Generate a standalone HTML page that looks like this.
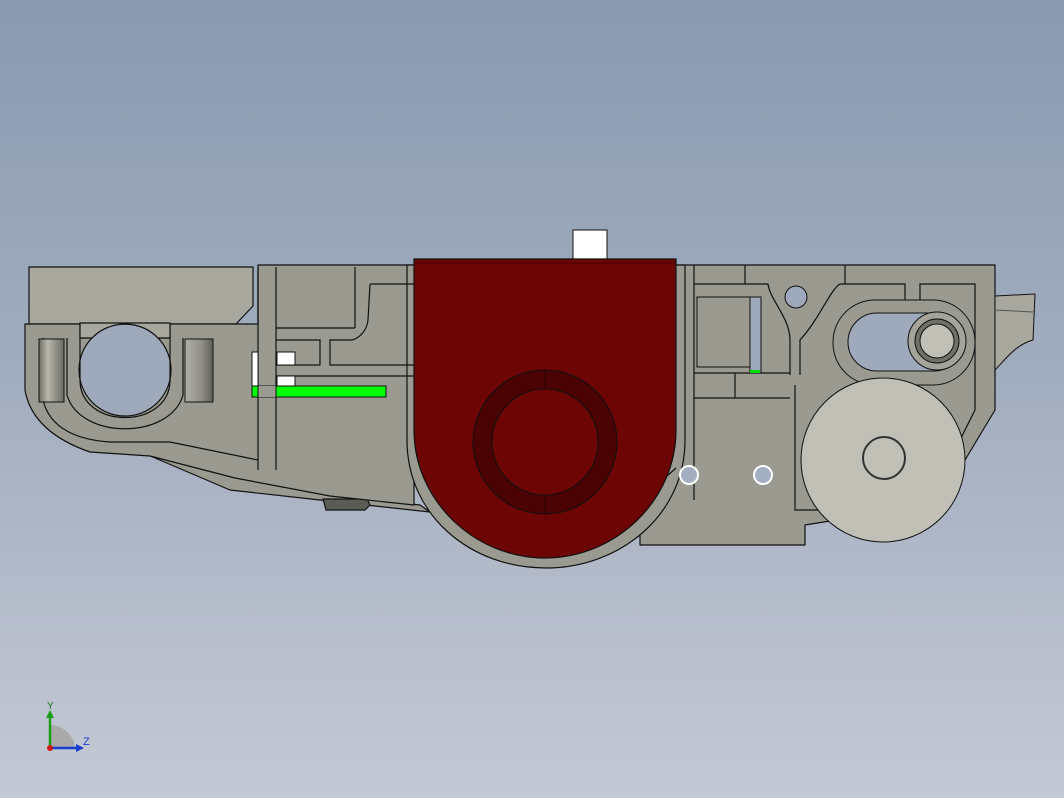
<!DOCTYPE html>
<html><head><meta charset="utf-8"><style>
html,body{margin:0;padding:0;width:1064px;height:798px;overflow:hidden}
body{background:linear-gradient(#8a9ab0 0%,#a3aec0 50%,#c5c9d5 100%)}
svg{position:absolute;left:0;top:0}
</style></head><body>
<svg width="1064" height="798" viewBox="0 0 1064 798">
<defs>
<linearGradient id="cyl" x1="0" x2="1"><stop offset="0" stop-color="#6e6e66"/><stop offset=".35" stop-color="#b8b8ac"/><stop offset="1" stop-color="#6a6a62"/></linearGradient>
<linearGradient id="cyl2" x1="0" x2="1"><stop offset="0" stop-color="#b0b0a6"/><stop offset=".6" stop-color="#8e8e86"/><stop offset="1" stop-color="#5e5e58"/></linearGradient>
</defs>
<g stroke="#111" stroke-width="1.2" stroke-linejoin="round">
<polygon points="29,267 253,267 253,306 236,324 29,324" fill="#a8a89e"/>
<polygon points="148,455 230,470 330,495 420,505 430,512 320,500 230,490" fill="#9a9a90"/>
<polygon points="323,499 367,499 370,505 365,510 326,510" fill="#5c5c56"/>
<path d="M25,324 L80,324 L80,338 L91,338 C105,325 145,325 159,338 L170,338 L170,324 L258,324 L258,265 L414,265 L414,505 L330,496 L235,478 L150,456 L90,452 C55,440 30,420 25,390 Z" fill="#9a9a90"/>
<path d="M676,265 L995,265 L995,410 L965,460 L930,505 L805,525 L805,545 L640,545 L640,500 L676,470 Z" fill="#9a9a90"/>
<path d="M407,265 L685,265 L685,440 C685,515 620,568 546,568 C470,568 407,515 407,440 Z" fill="#9a9a90"/>
</g>
<circle cx="125" cy="370" r="46" fill="#9eaabb" stroke="#111" stroke-width="1.2"/>
<path d="M80,323 L170,323 L170,338 L158,338 A46,46 0 0 0 92,338 L80,338 Z" fill="#a8a89e" stroke="#111" stroke-width="1.2"/>
<g fill="none" stroke="#111" stroke-width="1.2">
<path d="M80,338 L80,380 C80,430 170,430 170,380 L170,338"/>
<path d="M67,338 L67,395 C80,440 170,440 183,395 L183,338"/>
<path d="M43,338 L43,400 C50,430 80,440 110,442 L170,442 L258,460"/>
<path d="M258,267 L258,470 M276,267 L276,470 M276,328 L355,328 M355,267 L355,328 M370,284 L414,284 M370,284 L368,320 C367,330 360,338 352,340 L330,340 L330,365 L414,365 M276,340 L320,340 L320,365 L276,365 M276,376 L414,376"/>
<path d="M694,265 L694,500 M745,265 L745,284 M845,265 L845,284 M694,284 L768,284 C770,300 790,318 790,340 L790,375 M800,375 L800,340 C820,318 830,290 840,284 L905,284 L905,300 M920,300 L920,284 L975,284 L975,410 L950,460"/>
<path d="M694,373 L790,373 M694,398 L790,398 M735,373 L735,398 M795,385 L795,510 L830,510 M640,500 L676,468"/>
</g>
<rect x="39" y="339" width="25" height="63" fill="url(#cyl)" stroke="#111"/>
<rect x="185" y="339" width="28" height="63" fill="url(#cyl2)" stroke="#111"/>
<rect x="252" y="352" width="6" height="35" fill="#fff" stroke="#111"/>
<rect x="277" y="352" width="18" height="13" fill="#fff" stroke="#111"/>
<rect x="277" y="376" width="18" height="11" fill="#fff" stroke="#111"/>
<rect x="252" y="386" width="134" height="11" fill="#00ff00" stroke="#111"/>
<rect x="258" y="386" width="18" height="11" fill="#9a9a90"/>
<line x1="258" y1="386" x2="258" y2="397" stroke="#111"/><line x1="276" y1="386" x2="276" y2="397" stroke="#111"/>
<rect x="573" y="230" width="34" height="29" fill="#fff" stroke="#111"/>
<path d="M414,259 L676,259 L676,430 C676,500 616,558 545,558 C474,558 414,500 414,430 Z" fill="#6e0505" stroke="#111" stroke-width="1.2"/>
<line x1="414" y1="263" x2="676" y2="263" stroke="#4a0000"/>
<circle cx="545" cy="442" r="72" fill="#4a0202" stroke="#111"/>
<circle cx="545" cy="442" r="53" fill="#6e0505" stroke="#111"/>
<line x1="545" y1="370" x2="545" y2="389" stroke="#2a0000"/><line x1="545" y1="495" x2="545" y2="514" stroke="#2a0000"/>
<rect x="697" y="297" width="53" height="70" fill="#9a9a90" stroke="#111"/>
<rect x="750" y="297" width="11" height="76" fill="#9eaabb" stroke="#111"/>
<rect x="750" y="370" width="10" height="3" fill="#00dd00"/>
<circle cx="796" cy="297" r="11" fill="#9eaabb" stroke="#111"/>
<rect x="833" y="300" width="142" height="85" rx="42" fill="#9a9a90" stroke="#111"/>
<rect x="848" y="313" width="115" height="58" rx="29" fill="#9eaabb" stroke="#111"/>
<circle cx="937" cy="341" r="29" fill="#a4a49a" stroke="#111"/>
<circle cx="937" cy="341" r="22" fill="#707068" stroke="#111"/>
<circle cx="937" cy="341" r="17" fill="#c0c0b6" stroke="#111"/>
<circle cx="689" cy="475" r="9" fill="#a3aec0" stroke="#fff" stroke-width="2"/>
<circle cx="763" cy="475" r="9" fill="#a3aec0" stroke="#fff" stroke-width="2"/>
<circle cx="883" cy="460" r="82" fill="#c0c0b6" stroke="#111"/>
<circle cx="884" cy="458" r="21" fill="#c0c0b6" stroke="#333" stroke-width="2"/>
<path d="M995,296 L1035,294 L1033,340 C1015,345 1005,360 995,370 Z" fill="#a8a89e" stroke="#111"/>
<path d="M995,310 L1033,312" stroke="#555"/>
<g>
<path d="M50,748 L50,725 A25,25 0 0 1 75,748 Z" fill="#a9a9a9"/>
<line x1="50" y1="748" x2="50" y2="716" stroke="#1a9e1a" stroke-width="2.5"/>
<polygon points="46,718 54,718 50,710" fill="#1a9e1a"/>
<line x1="50" y1="748" x2="78" y2="748" stroke="#1a3fd0" stroke-width="2.5"/>
<polygon points="76,744 76,752 84,748" fill="#1a3fd0"/>
<circle cx="50" cy="748" r="3" fill="#d01a1a"/>
<text x="47" y="709" font-family="Liberation Sans,sans-serif" font-size="10" fill="#1a7a1a">Y</text>
<text x="83" y="745" font-family="Liberation Sans,sans-serif" font-size="11" fill="#1a3fd0">Z</text>
</g>
</svg>
</body></html>
